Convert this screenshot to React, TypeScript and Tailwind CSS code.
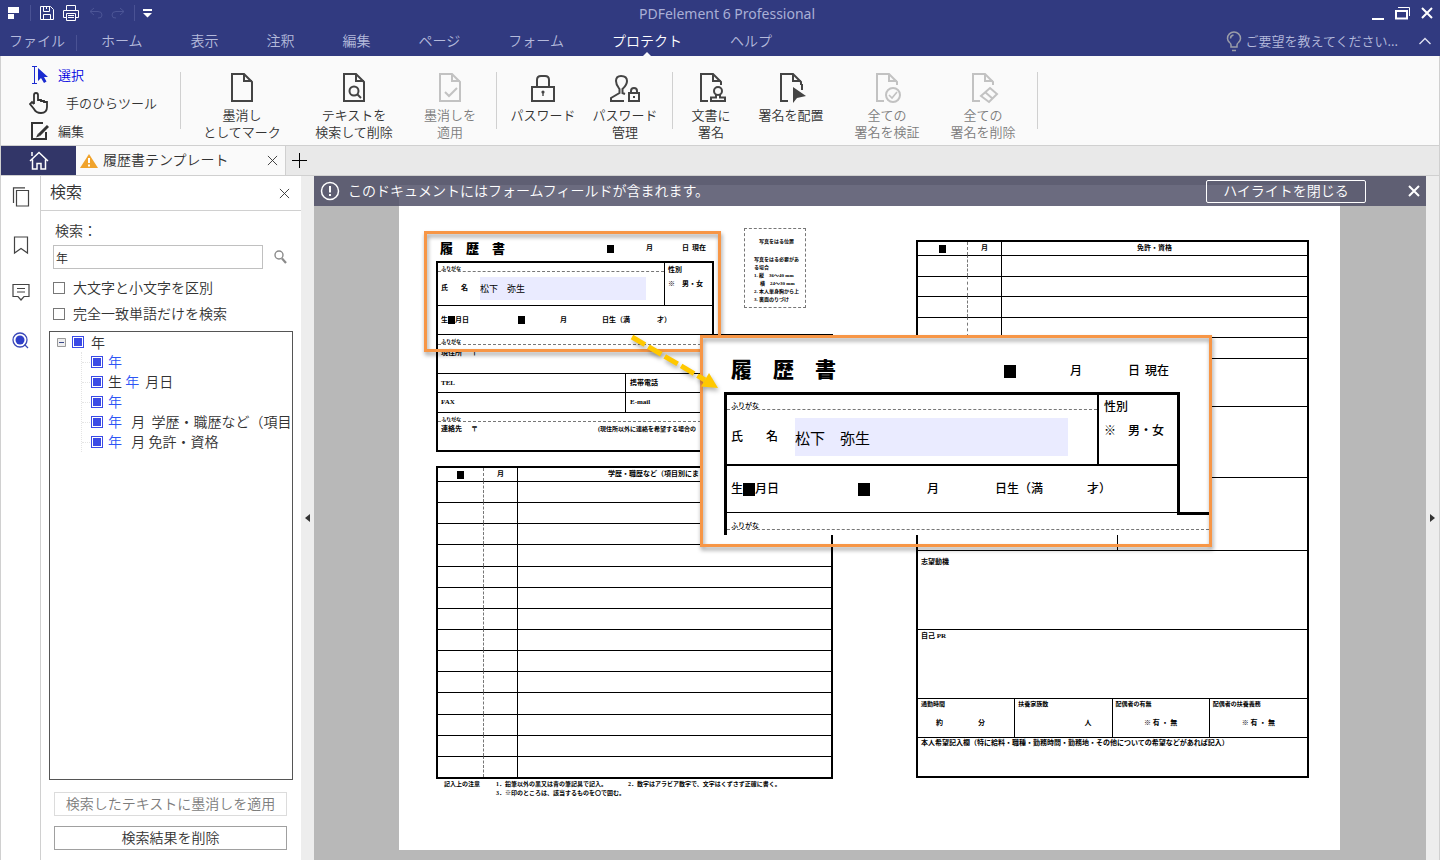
import { useState } from "react";
import type { ReactNode } from "react";
import clsx from "clsx";

const menus = ["ホーム", "表示", "注釈", "編集", "ページ", "フォーム", "プロテクト", "ヘルプ"];

// icons
const PAGE_FULL = "M2 2H14L22 10V29H2Z";
const PAGE_OPEN = "M9 29H2V2H14L22 10V13";
const FOLD = "M14 2V9H22";

function DocIcon({ open, children }: { open?: boolean; children?: ReactNode }) {
  return (
    <svg width="24" height="32" viewBox="0 0 24 32" fill="none" stroke="currentColor" strokeWidth="2" overflow="visible">
      <path d={open ? PAGE_OPEN : PAGE_FULL} />
      <path d={FOLD} />
      {children}
    </svg>
  );
}

const icons = {
  mark: <DocIcon />,
  searchDelete: (
    <DocIcon>
      <circle cx="12" cy="19" r="4.5" />
      <path d="M15 22l4 4" />
    </DocIcon>
  ),
  apply: (
    <DocIcon>
      <path d="M7 20l4 4 8-8" />
    </DocIcon>
  ),
  lock: (
    <svg width="28" height="32" viewBox="0 0 28 32" fill="none" stroke="currentColor" strokeWidth="2">
      <path d="M3 15H25V29H3Z" />
      <path d="M8 15V8Q8 4 12 4H16Q20 4 20 8V15" />
      <circle cx="14" cy="20" r="1.6" fill="currentColor" stroke="none" />
      <path d="M14 19V24" strokeWidth="1.4" />
    </svg>
  ),
  lockManage: (
    <svg width="32" height="32" viewBox="0 0 32 32" fill="none" stroke="currentColor" strokeWidth="2">
      <path d="M12 4C8 4 7 6 7 9C7 13 9 15 10.500 17V21L2 26V29H15" />
      <path d="M12 4C16 4 18 6 18 9C18 13 15.500 15 13.500 17V21L16 22" />
      <path d="M20 21H30V29H20Z" />
      <path d="M22 21V19Q22 16 25 16Q28 16 28 19V21" />
      <path d="M25 24V26" />
    </svg>
  ),
  signDoc: (
    <DocIcon open>
      <circle cx="19" cy="19" r="4" />
      <path d="M17 22V25.500H12V29H26V25.500H21V22" />
    </DocIcon>
  ),
  placeSign: (
    <DocIcon open>
      <path d="M14 15V31L18 26L27 24Z" fill="currentColor" stroke="none" />
      <path d="M23 12V18" />
    </DocIcon>
  ),
  verify: (
    <DocIcon open>
      <circle cx="18" cy="23" r="7" />
      <path d="M14 23l3 3 5-6" strokeWidth="1.6" />
    </DocIcon>
  ),
  erase: (
    <DocIcon open>
      <path d="M19 16L26 22L18 30L10 24Z M14 20L22 27" />
    </DocIcon>
  ),
};

interface RibbonItem {
  icon: ReactNode;
  lines: string[];
  width: string;
  disabled?: boolean;
}

const ribbonGroups: { className: string; items: RibbonItem[] }[] = [
  {
    className: "pl-[5px] pr-[6px]",
    items: [
      { icon: icons.mark, lines: ["墨消し", "としてマーク"], width: "w-28" },
      { icon: icons.searchDelete, lines: ["テキストを", "検索して削除"], width: "w-28" },
      { icon: icons.apply, lines: ["墨消しを", "適用"], width: "w-20", disabled: true },
    ],
  },
  {
    className: "pl-[6px] pr-[5px]",
    items: [
      { icon: icons.lock, lines: ["パスワード"], width: "w-20" },
      { icon: icons.lockManage, lines: ["パスワード", "管理"], width: "w-[84px]" },
    ],
  },
  {
    className: "pr-3",
    items: [
      { icon: icons.signDoc, lines: ["文書に", "署名"], width: "w-[76px]" },
      { icon: icons.placeSign, lines: ["署名を配置"], width: "w-[84px]" },
      { icon: icons.verify, lines: ["全ての", "署名を検証"], width: "w-[108px]", disabled: true },
      { icon: icons.erase, lines: ["全ての", "署名を削除"], width: "w-[84px]", disabled: true },
    ],
  },
];

function Cross({ size, weight = 1 }: { size: number; weight?: number }) {
  return (
    <svg width={size} height={size} viewBox="0 0 12 12" fill="none" stroke="currentColor" strokeWidth={weight}>
      <path d="M1 1L11 11M11 1L1 11" />
    </svg>
  );
}

function Separator() {
  return <span className="mt-4 h-[57px] w-px bg-[#d0d0d0]" />;
}

function TitleBar() {
  return (
    <div className="grid h-[26px] grid-cols-[1fr_auto_1fr] items-center text-white">
      <div className="flex items-center pl-2">
        <svg width="12" height="13" viewBox="0 0 12 13" fill="currentColor">
          <path d="M0 0H11V6H0ZM0 7H6V12H0Z" />
        </svg>
        <span className="ml-[10px] h-4 w-px bg-[#4a5294]" />
        <button aria-label="保存" className="ml-[9px]">
          <svg width="14" height="15" viewBox="0 0 14 15" fill="none" stroke="currentColor">
            <path d="M.5 .5H10.5L13.5 3.5V13.5H.5Z" />
            <path d="M3.5 .5V5.500H9.500V.5M3.500 13.500V8.500H10.500V13.500" />
            <path d="M6.500 1V3" />
          </svg>
        </button>
        <button aria-label="印刷" className="ml-[9px]">
          <svg width="16" height="16" viewBox="0 0 16 16" fill="none" stroke="currentColor">
            <path d="M3.500 5V.5H12.500V5M3 12.500H.5V5.500H15.500V12.500H13" />
            <path d="M3.500 8.500H12.500V15.500H3.500ZM5 10.500H11M5 12.500H11" />
          </svg>
        </button>
        <button aria-label="元に戻す" disabled className="ml-[10px] text-[#4c5596]">
          <svg width="14" height="12" viewBox="0 0 14 12" fill="none" stroke="currentColor">
            <path d="M5 1L1 4.500L5 8M1 4.500H9Q13 4.500 13 8T9 11" />
          </svg>
        </button>
        <button aria-label="やり直し" disabled className="ml-2 text-[#4c5596]">
          <svg width="14" height="12" viewBox="0 0 14 12" fill="none" stroke="currentColor">
            <path d="M9 1L13 4.500L9 8M13 4.500H5Q1 4.500 1 8T5 11" />
          </svg>
        </button>
        <span className="ml-[9px] h-4 w-px bg-[#4a5294]" />
        <button aria-label="カスタマイズ" className="ml-2">
          <svg width="9" height="9" viewBox="0 0 9 9" fill="currentColor">
            <path d="M0 0H9V2H0ZM0 4H9L4.500 8.500Z" />
          </svg>
        </button>
      </div>
      <span className="pl-[14px] font-['Noto_Sans'] text-[14px] font-normal text-[#a9afd6]">
        PDFelement 6 Professional
      </span>
      <div className="flex items-center justify-end gap-[10px] pr-[7px]">
        <button aria-label="最小化">
          <svg width="13" height="13" viewBox="0 0 13 13">
            <path d="M0 11H12V13H0Z" fill="currentColor" />
          </svg>
        </button>
        <button aria-label="元のサイズ">
          <svg width="16" height="13" viewBox="0 0 16 13" fill="none" stroke="currentColor">
            <path d="M1 4H12V11.500H1Z" strokeWidth="2" />
            <path d="M3 .5H14.500V9" />
          </svg>
        </button>
        <button aria-label="閉じる">
          <Cross size={12} weight={2} />
        </button>
      </div>
    </div>
  );
}

function MenuBar({ active, onSelect }: { active: string; onSelect: (m: string) => void }) {
  return (
    <nav className="flex h-[30px] items-stretch text-[14px] text-[#b5badc]">
      <button className="pr-[11px] pb-[2px] pl-[9px]">ファイル</button>
      <span className="mt-[9px] h-4 w-px bg-[#4a5294]" />
      {menus.map((m) => (
        <button
          key={m}
          onClick={() => onSelect(m)}
          className={clsx("relative px-6 pb-[2px]", m === active && "text-white")}
        >
          {m}
          {m === active && (
            <svg className="absolute bottom-0 left-1/2 -translate-x-1/2" width="8" height="4" viewBox="0 0 8 4">
              <path d="M0 4L4 0L8 4Z" fill="#fafafa" />
            </svg>
          )}
        </button>
      ))}
      <button className="ml-auto flex items-center gap-1 text-[13px]">
        <svg width="16" height="21" viewBox="0 0 16 21" fill="none" stroke="#9b9da8" strokeWidth="1.5">
          <path d="M5 16V14Q5 12.500 3.500 11.500Q1.500 9.500 1.500 7.500A6.500 6.500 0 0 1 14.500 7.500Q14.500 9.500 12.500 11.500Q11 12.500 11 14V16Z" />
          <path d="M4.500 7.500Q4.500 4.500 7.500 4M6 19.500H10" />
        </svg>
        ご要望を教えてください...
      </button>
      <button aria-label="リボンを折りたたむ" className="mr-2 ml-5">
        <svg width="14" height="8" viewBox="0 0 14 8" fill="none" stroke="#dfe1f0" strokeWidth="1.4">
          <path d="M1.500 7L7 1.500L12.500 7" />
        </svg>
      </button>
    </nav>
  );
}

function Ribbon() {
  return (
    <div className="flex h-[90px] shrink-0 border-x border-b border-[#d0d0d0] bg-[#fafafa] text-[13px] text-[#333]">
      <div className="flex w-[179px] flex-col pt-[5px] pl-7">
        <button className="flex h-7 items-center gap-[9px] text-[#0000e0]">
          <svg width="20" height="18" viewBox="0 0 20 18">
            <path d="M3 .5H8M3 17.500H8M5.500 .5V17.500" stroke="#1b2bd0" fill="none" />
            <path d="M9 2V15L12 12L15 17L17.500 15.500L15 11H19Z" fill="#1b2bd0" />
          </svg>
          選択
        </button>
        <button className="flex h-7 items-center gap-[17px]">
          <svg width="20" height="22" viewBox="0 0 20 22" fill="none" stroke="currentColor" strokeWidth="1.8">
            <path d="M5 12V3Q5 1 7 1T9 3V8H12V9H15V10H18V15Q18 21 12 21Q7 21 5 17L1 12L3 10L5 12" />
          </svg>
          手のひらツール
        </button>
        <button className="flex h-7 items-center gap-[9px]">
          <svg width="20" height="18" viewBox="0 0 20 18" fill="none" stroke="currentColor" strokeWidth="2">
            <path d="M17 10V17H3V1H14" />
            <path d="M10 13L19 4" strokeWidth="3" />
            <path d="M7 15.500L11 14L9 11.500Z" fill="currentColor" stroke="none" />
          </svg>
          編集
        </button>
      </div>
      {ribbonGroups.map((group, i) => (
        <div key={i} className="flex">
          <Separator />
          <div className={clsx("flex", group.className)}>
            {group.items.map((item) => (
              <button
                key={item.lines.join()}
                disabled={item.disabled}
                className={clsx(
                  "flex flex-col items-center pt-4 leading-[17px]",
                  item.width,
                  item.disabled && "text-[#7c7c7c]"
                )}
              >
                <span className={clsx("mb-[2px]", item.disabled ? "text-[#c2c2c2]" : "text-[#444]")}>
                  {item.icon}
                </span>
                {item.lines.map((line) => (
                  <span key={line}>{line}</span>
                ))}
              </button>
            ))}
          </div>
        </div>
      ))}
      <Separator />
    </div>
  );
}

function TabStrip() {
  return (
    <div className="flex h-[30px] shrink-0 border-x border-b border-[#d0d0d0] bg-[#e9e9e9]">
      <button aria-label="ホーム" className="flex w-[75px] items-center justify-center bg-[#323668] text-white">
        <svg width="20" height="19" viewBox="0 0 20 19" fill="none" stroke="currentColor" strokeWidth="1.5">
          <path d="M1 10L10 1.500L19 10M3.500 8.500V18H8V12.500H12V18H16.500V8.500M3 5V1" />
        </svg>
      </button>
      <div className="flex w-[210px] items-center border-r border-[#d0d0d0] bg-[#fafafa] pr-[7px] pl-1 text-[14px] text-[#333]">
        <svg width="18" height="14" viewBox="0 0 18 14">
          <path d="M9 0L18 14H0Z" fill="#f0a32c" />
          <path d="M9 4V9M9 10.500V12.500" stroke="#fff" strokeWidth="2" />
        </svg>
        <span className="ml-[5px] pb-[2px]">履歴書テンプレート</span>
        <button aria-label="タブを閉じる" className="ml-auto">
          <Cross size={11} />
        </button>
      </div>
      <button aria-label="新しいタブ" className="px-[6px] text-black">
        <svg width="15" height="15" viewBox="0 0 15 15" stroke="currentColor" strokeWidth="1">
          <path d="M7.500 0V15M0 7.500H15" />
        </svg>
      </button>
    </div>
  );
}

function SideRail() {
  return (
    <div className="flex w-10 shrink-0 flex-col items-center border-r border-[#d0d0d0] bg-white pt-[11px] text-[#444]">
      <button aria-label="サムネイル" className="mb-7">
        <svg width="18" height="20" viewBox="0 0 18 20" fill="none" stroke="currentColor" strokeWidth="1.2">
          <path d="M4.500 3.500H16.500V19H4.500ZM1.500 16V.8H13" />
        </svg>
      </button>
      <button aria-label="ブックマーク" className="mb-7">
        <svg width="18" height="20" viewBox="0 0 18 20" fill="none" stroke="currentColor" strokeWidth="1.2">
          <path d="M2.500 2V18L9 13.500L15.500 18V2Z" />
        </svg>
      </button>
      <button aria-label="注釈" className="mb-7">
        <svg width="18" height="20" viewBox="0 0 18 20" fill="none" stroke="currentColor" strokeWidth="1.2">
          <path d="M1 1.500H17V13.500H12L9 17L6 13.500H1ZM5 5.500H13M5 9H13" />
        </svg>
      </button>
      <button aria-label="検索">
        <svg width="18" height="20" viewBox="0 0 18 20" fill="none" stroke="#3a48b8" strokeWidth="1.3">
          <circle cx="8" cy="9" r="7" />
          <circle cx="8" cy="9" r="4.500" fill="#2f3fc8" stroke="none" />
          <path d="M12.500 13.500L16 17" />
        </svg>
      </button>
    </div>
  );
}

// highlighted parts are wrapped in **
const results = ["**年", "生 **年**  月日", "**年", "**年**   月  学歴・職歴など（項目", "**年**   月 免許・資格"];

function TreeCheck({ label }: { label: string }) {
  return (
    <input
      type="checkbox"
      aria-label={label}
      defaultChecked
      className="mr-[5px] size-3 shrink-0 appearance-none border border-[#3a4ae6] bg-[#3a4ae6] shadow-[inset_0_0_0_1px_#fff]"
    />
  );
}

function SearchPanel() {
  return (
    <aside className="flex w-[260px] shrink-0 flex-col bg-white text-[14px] text-[#333]">
      <div className="flex h-[35px] items-center justify-between border-b border-[#d0d0d0] pr-[11px] pl-[9px]">
        <h2 className="pb-[5px] text-[16px]">検索</h2>
        <button aria-label="パネルを閉じる">
          <Cross size={11} />
        </button>
      </div>
      <label htmlFor="query" className="mt-[9px] pl-[14px] leading-5">
        検索：
      </label>
      <div className="mt-[5px] flex items-center pl-3">
        <input
          id="query"
          defaultValue="年"
          className="h-6 w-[210px] border border-[#c0c0c0] px-[2px] text-[12px] text-[#222] outline-none"
        />
        <button aria-label="検索を実行" className="ml-[11px]">
          <svg width="13" height="14" viewBox="0 0 13 14" fill="none" stroke="#8a8a8a" strokeWidth="1.4">
            <circle cx="5" cy="5" r="4" />
            <path d="M8 8.500L12 13" strokeWidth="2.2" />
          </svg>
        </button>
      </div>
      <div className="mt-[6px] flex flex-col pl-3">
        {["大文字と小文字を区別", "完全一致単語だけを検索"].map((label) => (
          <label key={label} className="flex h-[26px] items-center gap-2">
            <input type="checkbox" className="size-3 appearance-none border border-[#777] bg-white" />
            <span className="pb-[2px]">{label}</span>
          </label>
        ))}
      </div>
      <div className="mx-2 mt-1 flex-1 overflow-hidden border border-[#555]">
        <div className="flex h-5 items-center pl-[7px]">
          <button aria-label="折りたたむ" className="mr-[6px]">
            <svg width="9" height="9" viewBox="0 0 9 9" fill="#eee" stroke="#999">
              <path d="M.5 .5H8.500V8.500H.5Z" />
              <path d="M2 4.500H7" stroke="#3a4a8a" />
            </svg>
          </button>
          <TreeCheck label="年" />
          <span className="pl-[2px]">年</span>
        </div>
        <ul className="ml-[31px] border-l border-dotted border-[#e4e4e4]">
          {results.map((r, i) => (
            <li key={i} className="flex h-5 items-center whitespace-pre">
              <span className="mr-px w-2 shrink-0 border-t border-dotted border-[#e4e4e4]" />
              <TreeCheck label={r.replaceAll("**", "")} />
              {r.split("**").map((part, j) => (
                <span key={j} className={clsx("pb-px", j === 1 && "text-[#2d55f5]")}>
                  {part}
                </span>
              ))}
            </li>
          ))}
        </ul>
      </div>
      <div className="flex flex-col gap-[10px] pt-3 pr-[14px] pb-[10px] pl-[13px]">
        <button disabled className="h-6 border border-[#dcdcdc] pb-[2px] leading-5 text-[#7c7c7c]">
          検索したテキストに墨消しを適用
        </button>
        <button className="h-6 border border-[#a0a0a0] pb-[2px] leading-5">検索結果を削除</button>
      </div>
    </aside>
  );
}

function Gutter({ dir }: { dir: "left" | "right" }) {
  return (
    <button
      aria-label={dir === "left" ? "左パネルを閉じる" : "右パネルを開く"}
      className={clsx(
        "flex w-[13px] shrink-0 items-center justify-center bg-[#ededed] text-[#333]",
        dir === "right" && "box-content border-r border-[#d0d0d0]"
      )}
    >
      <svg width="5" height="8" viewBox="0 0 5 8" fill="currentColor">
        <path d={dir === "left" ? "M5 0V8L0 4Z" : "M0 0V8L5 4Z"} />
      </svg>
    </button>
  );
}

// The top of the form is drawn twice, on the page and enlarged in the callout
const formSizes = {
  small: {
    root: "w-[278px] text-[7px]",
    title: "h-[33px] pt-2 pl-1",
    heading: "w-[167px] text-[13px]",
    c1: "w-[39px]",
    c2: "w-9",
    c3: "w-[10px]",
    redact: "h-2 w-[7px]",
    box: "border-x-2 border-t-2",
    rowA: "h-[43px] border-b",
    furi: "h-[9px] text-[5px] leading-[12px] pl-[3px]",
    name: "pl-[3px]",
    n1: "w-5",
    n2: "w-[19px]",
    field: "h-[23px] w-[166px] text-[9px]",
    sex: "w-12 border-l pl-[3px] leading-[14px]",
    rowB: "h-7 pl-[3px]",
    b1: "w-[77px]",
    b2: "w-[42px]",
    b3: "w-[42px]",
    b4: "w-[55px]",
  },
  large: {
    root: "w-[456px] text-[12px]",
    title: "h-[54px] pt-[12px] pl-[7px]",
    heading: "w-[273px] text-[21px]",
    c1: "w-[66px]",
    c2: "w-[58px]",
    c3: "w-[17px]",
    redact: "h-[13px] w-3",
    box: "border-x-3 border-t-3",
    rowA: "h-[71px] border-b-2",
    furi: "h-[15px] text-[7px] leading-[22px] pl-1",
    name: "pl-1",
    n1: "w-[35px]",
    n2: "w-[29px]",
    field: "h-[38px] w-[273px] text-[15px]",
    sex: "w-20 border-l-2 pl-[5px] leading-6",
    rowB: "h-[46px] pl-1",
    b1: "w-[127px]",
    b2: "w-[69px]",
    b3: "w-[68px]",
    b4: "w-[92px]",
  },
};

function FormTop({ size }: { size: "small" | "large" }) {
  const s = formSizes[size];
  return (
    <div className={clsx("shrink-0", s.root)}>
      <div className={clsx("flex items-center", s.title)}>
        <h1 className={clsx("font-black", s.heading)}>履　歴　書</h1>
        <span className={s.c1}>
          <span className={clsx("block bg-black", s.redact)} />
        </span>
        <span className={s.c2}>月</span>
        <span className={s.c3}>日</span>
        <span>現在</span>
      </div>
      <div className={clsx("border-black", s.box)}>
        <div className={clsx("flex border-black", s.rowA)}>
          <div className="flex flex-1 flex-col">
            <div className={clsx("overflow-hidden border-b border-dashed border-[#777]", s.furi)}>ふりがな</div>
            <div className={clsx("flex flex-1 items-center", s.name)}>
              <span className={s.n1}>氏</span>
              <span className={s.n2}>名</span>
              <input
                aria-label="氏名"
                defaultValue="松下　弥生"
                className={clsx("bg-[#eaebff] font-normal outline-none", s.field)}
              />
            </div>
          </div>
          <div className={clsx("border-black", s.sex)}>
            <p>性別</p>
            <p>※　男・女</p>
          </div>
        </div>
        <div className={clsx("flex items-center", s.rowB)}>
          <span className={clsx("flex items-center", s.b1)}>
            生
            <span className={clsx("bg-black", s.redact)} />
            月日
          </span>
          <span className={s.b2}>
            <span className={clsx("block bg-black", s.redact)} />
          </span>
          <span className={s.b3}>月</span>
          <span className={s.b4}>日生（満</span>
          <span>才）</span>
        </div>
      </div>
    </div>
  );
}

interface RecordTableProps {
  title: string;
  rows: number;
  className: string;
  yearCol: string;
}

function RecordTable({ title, rows, className, yearCol }: RecordTableProps) {
  return (
    <table className={clsx("w-full table-fixed border-separate border-spacing-0", className)}>
      <thead>
        <tr className="h-[13px] leading-[13px]">
          <th className={clsx("border-r border-dashed border-[#777] p-0", yearCol)}>
            <span className="mx-auto block h-2 w-[7px] bg-black" />
          </th>
          <th className="w-[34px] border-r border-black p-0">月</th>
          <th className="p-0">{title}</th>
        </tr>
      </thead>
      <tbody>
        {Array.from({ length: rows }, (_, i) => (
          <tr key={i}>
            <td className="border-t border-r border-dashed border-t-black border-r-[#777] p-0 [border-top-style:solid]" />
            <td className="border-t border-r border-black p-0" />
            <td className="border-t border-black p-0" />
          </tr>
        ))}
      </tbody>
    </table>
  );
}

function LeftSheet() {
  return (
    <div className="w-[397px]">
      <div className="flex items-start justify-between pr-[27px]">
        <FormTop size="small" />
        <div className="h-20 w-[62px] border border-dashed border-[#777] pt-[9px] pl-[9px] text-[5px] leading-2 whitespace-nowrap">
          <p className="mb-[10px] pl-[5px]">写真をはる位置</p>
          <p>写真をはる必要があ</p>
          <p>る場合</p>
          <p>1. 縦　36～40 mm</p>
          <p className="pl-[6px]">横　24～30 mm</p>
          <p>2. 本人単身胸から上</p>
          <p>3. 裏面のりづけ</p>
        </div>
      </div>
      <div className="border-x-2 border-t border-b-2 border-black">
        <div className="h-[10px] overflow-hidden border-b border-dashed border-[#777] pl-[3px] text-[5px] leading-[14px]">
          ふりがな
        </div>
        <div className="flex h-[29px] gap-[9px] border-b border-black pt-[3px] pl-[3px] leading-[10px]">
          <span>現住所</span>
          <span>〒</span>
        </div>
        <div className="grid grid-cols-[188px_1fr] leading-[18px]">
          <span className="border-r border-b border-black pl-[3px]">TEL</span>
          <span className="border-b border-black pl-1">携帯電話</span>
          <span className="border-r border-b border-black pl-[3px] leading-[19px]">FAX</span>
          <span className="border-b border-black pl-1 leading-[19px]">E-mail</span>
        </div>
        <div className="h-[9px] overflow-hidden border-b border-dashed border-[#777] pl-[3px] text-[5px] leading-[13px]">
          ふりがな
        </div>
        <div className="flex h-7 pt-[2px] pl-[3px] leading-[11px]">
          <span className="w-[30px]">連絡先</span>
          <span className="w-[127px]">〒</span>
          <span className="text-[6px]">(現住所以外に連絡を希望する場合の</span>
        </div>
      </div>
      <div className="mt-[14px] border-2 border-black">
        <RecordTable
          title="学歴・職歴など（項目別にまとめて書く）"
          rows={14}
          className="h-[309px]"
          yearCol="w-[46px]"
        />
      </div>
      <div className="mt-px grid grid-cols-[52px_132px_1fr] pl-2 text-[6px] leading-[9px] whitespace-nowrap">
        <span>記入上の注意</span>
        <span>1．鉛筆以外の黒又は青の筆記具で記入。</span>
        <span>2．数字はアラビア数字で、文字はくずさず正確に書く。</span>
        <span className="col-start-2">3．※印のところは、該当するものを〇で囲む。</span>
      </div>
    </div>
  );
}

const familyCells = [
  { label: "通勤時間", value: "約　　　　　分", className: "pl-[18px]" },
  { label: "扶養家族数", value: "人", className: "pr-5 text-right" },
  { label: "配偶者の有無", value: "※ 有 ・ 無", className: "text-center" },
  { label: "配偶者の扶養義務", value: "※ 有 ・ 無", className: "text-center" },
];

function RightSheet() {
  return (
    <div className="mt-3 w-[393px] self-start border-2 border-black">
      <RecordTable title="免許・資格" rows={5} className="h-[116px]" yearCol="w-[50px]" />
      <div className="h-[49px] border-y border-black" />
      <div className="h-[71px] border-b border-black" />
      <div className="grid h-[73px] grid-cols-[200px_1fr] border-b border-black">
        <span className="border-r border-black" />
      </div>
      <div className="h-[79px] border-b border-black pt-[5px] pl-[3px] leading-[12px]">志望動機</div>
      <div className="h-[69px] border-b border-black pl-[3px] leading-[12px]">自己 PR</div>
      <div className="grid h-[39px] grid-cols-4 divide-x divide-black border-b border-black">
        {familyCells.map((cell) => (
          <div key={cell.label}>
            <p className="pl-[3px] text-[6px] leading-[11px]">{cell.label}</p>
            <p className={clsx("pt-2 leading-[11px]", cell.className)}>{cell.value}</p>
          </div>
        ))}
      </div>
      <div className="h-[38px] pl-[3px] leading-[10px] whitespace-nowrap">
        本人希望記入欄（特に給料・職種・勤務時間・勤務地・その他についての希望などがあれば記入）
      </div>
    </div>
  );
}

function DocumentView() {
  const [notice, setNotice] = useState(true);

  return (
    <main className="relative min-w-0 flex-1 overflow-hidden bg-[#b8b8b8] pt-[9px] pr-px">
      <article className="relative mx-auto flex w-[941px] justify-between bg-white pt-[43px] pr-[31px] pb-[52px] pl-[37px] font-['Liberation_Serif','Noto_Sans_CJK_JP',serif] text-[7px] font-bold text-black">
        <LeftSheet />
        <RightSheet />

        {/* callout with the enlarged form */}
        <div className="absolute top-[46px] left-[25px] h-[121px] w-[297px] border-3 border-[#f79646] drop-shadow-[1px_3px_2px_rgba(0,0,0,0.4)]" />
        <div className="absolute top-[153px] left-[304px] h-[197px] w-[506px] overflow-hidden bg-white pl-[21px] font-medium">
          <FormTop size="large" />
          <div className="h-[24px] border-l-3 border-black">
            <div className="ml-[450px] h-[3px] bg-black" />
            <div className="-mt-[3px] h-px w-[450px] bg-black" />
            <div className="mt-[1px] h-[16px] overflow-hidden border-b border-dashed border-[#777] pl-1 text-[7px] leading-[24px]">
              ふりがな
            </div>
          </div>
        </div>
        <div className="absolute top-[150px] left-[301px] h-[212px] w-[512px] border-3 border-[#f79646] drop-shadow-[1px_3px_2px_rgba(0,0,0,0.4)]" />
        <svg
          className="absolute top-[147px] left-[230px] drop-shadow-[1px_3px_2px_rgba(0,0,0,0.3)]"
          width="92"
          height="60"
          viewBox="0 0 92 60"
        >
          <path d="M3 5L76 48" stroke="#ffc800" strokeWidth="5" strokeDasharray="15 4" fill="none" />
          <path d="M89 56L72 54.500L80 41Z" fill="#ffc800" />
        </svg>
      </article>

      {notice && (
        <div className="absolute inset-x-0 top-0 flex h-[30px] items-center bg-[#4d4d65]/83 pr-[6px] pl-[6px] text-[14px] text-white">
          <svg width="20" height="20" viewBox="0 0 20 20" fill="none" stroke="currentColor" strokeWidth="1.5">
            <circle cx="10" cy="10" r="8.500" />
            <path d="M10 5V11.500M10 13V15" strokeWidth="2" />
          </svg>
          <span className="ml-2 pb-[2px]">このドキュメントにはフォームフィールドが含まれます。</span>
          <button className="mr-[42px] ml-auto h-[23px] w-40 rounded-xs border border-white pb-[2px] leading-[19px]">
            ハイライトを閉じる
          </button>
          <button aria-label="通知を閉じる" onClick={() => setNotice(false)}>
            <Cross size={12} weight={2} />
          </button>
        </div>
      )}
    </main>
  );
}

export default function App() {
  const [menu, setMenu] = useState("プロテクト");

  return (
    <div className="flex h-screen flex-col overflow-hidden bg-white font-['Noto_Sans_CJK_JP',sans-serif] font-[350]">
      <header className="shrink-0 bg-[#313a80]">
        <TitleBar />
        <MenuBar active={menu} onSelect={setMenu} />
      </header>
      <Ribbon />
      <TabStrip />
      <div className="flex min-h-0 flex-1 border-l border-[#d0d0d0]">
        <SideRail />
        <SearchPanel />
        <Gutter dir="left" />
        <DocumentView />
        <Gutter dir="right" />
      </div>
    </div>
  );
}
